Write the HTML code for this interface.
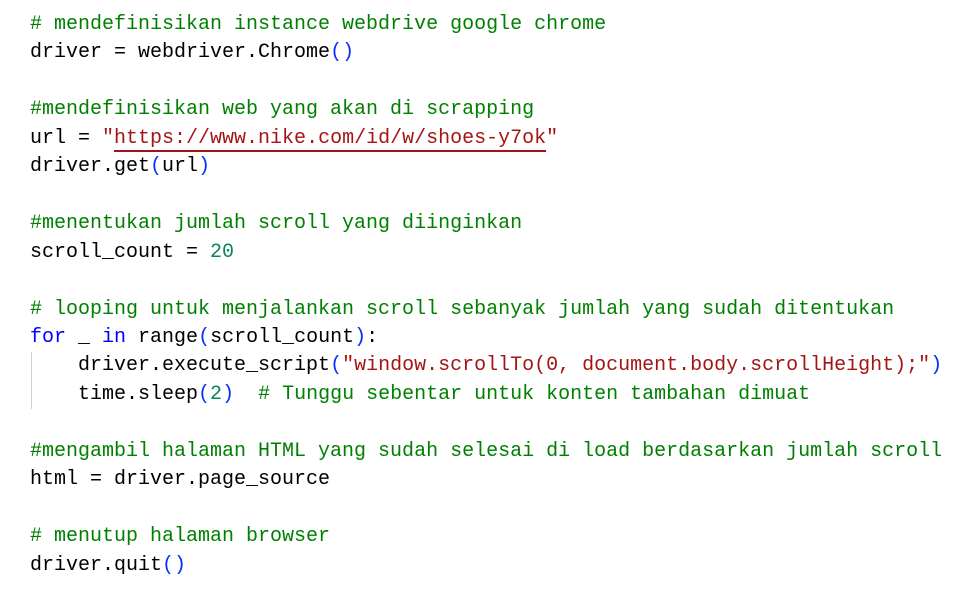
<!DOCTYPE html>
<html><head><meta charset="utf-8"><style>
body{margin:0;background:#fff;width:965px;height:602px;overflow:hidden}
pre{margin:0;position:absolute;left:30px;top:11px;font-family:"Liberation Mono",monospace;font-size:20px;line-height:28.45px;color:#000}
.c{color:#008000}.s{color:#a31515}.p{color:#0431fa}.n{color:#098658}.k{color:#0000ff}
.u{text-decoration:underline;text-decoration-color:#a31515;text-underline-offset:7px;text-decoration-thickness:2px}
.g{position:absolute;left:31px;top:352px;width:1px;height:57px;background:#d0d0d0}
</style></head><body>
<div class="g"></div>
<pre><span class="c"># mendefinisikan instance webdrive google chrome</span>
driver = webdriver.Chrome<span class="p">()</span>

<span class="c">#mendefinisikan web yang akan di scrapping</span>
url = <span class="s">"<span class="u">https://www.nike.com/id/w/shoes-y7ok</span>"</span>
driver.get<span class="p">(</span>url<span class="p">)</span>

<span class="c">#menentukan jumlah scroll yang diinginkan</span>
scroll_count = <span class="n">20</span>

<span class="c"># looping untuk menjalankan scroll sebanyak jumlah yang sudah ditentukan</span>
<span class="k">for</span> _ <span class="k">in</span> range<span class="p">(</span>scroll_count<span class="p">)</span>:
    driver.execute_script<span class="p">(</span><span class="s">"window.scrollTo(0, document.body.scrollHeight);"</span><span class="p">)</span>
    time.sleep<span class="p">(</span><span class="n">2</span><span class="p">)</span>  <span class="c"># Tunggu sebentar untuk konten tambahan dimuat</span>

<span class="c">#mengambil halaman HTML yang sudah selesai di load berdasarkan jumlah scroll</span>
html = driver.page_source

<span class="c"># menutup halaman browser</span>
driver.quit<span class="p">()</span></pre>
</body></html>
